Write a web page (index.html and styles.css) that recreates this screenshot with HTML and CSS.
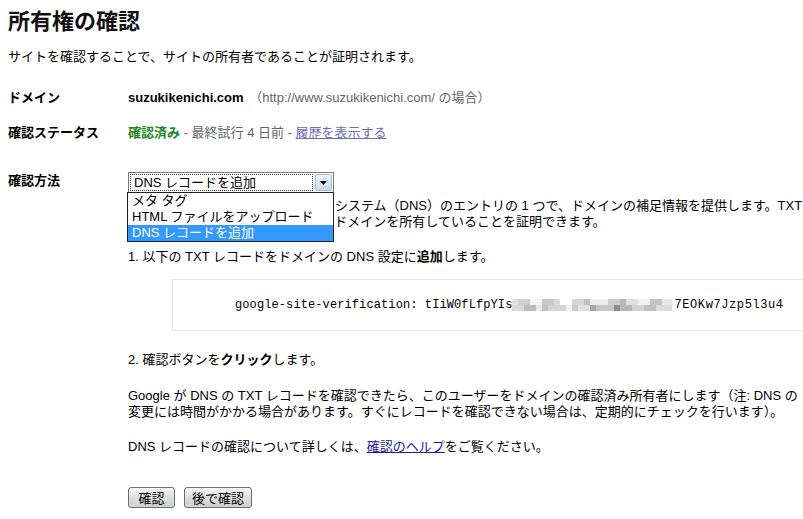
FILE: index.html
```html
<!DOCTYPE html>
<html lang="ja">
<head>
  <meta charset="UTF-8" />
  <title>所有権の確認</title>
  <link rel="stylesheet" href="styles.css">
</head>
<body>

  <h1>所有権の確認</h1>
  <p class="intro">サイトを確認することで、サイトの所有者であることが証明されます。</p>

  <div class="row row-domain">
    <div class="label">ドメイン</div>
    <div class="value">
      <b>suzukikenichi.com</b>
      <span class="muted">（http://www.suzukikenichi.com/ の場合）</span>
    </div>
  </div>

  <div class="row row-status">
    <div class="label">確認ステータス</div>
    <div class="value">
      <span class="ok">確認済み</span>
      <span class="muted">- 最終試行 4 日前 -</span>
      <a href="#" class="visited">履歴を表示する</a>
    </div>
  </div>

  <div class="row row-method">
    <div class="label">確認方法</div>
    <div class="value">

      <div class="select-wrap">
        <div class="select">
          <span class="select-text">DNS レコードを追加</span>
          <span class="select-arrow">
            <svg width="7" height="4" viewBox="0 0 7 4"><path d="M0 0h7L3.5 4z" fill="#000"/></svg>
          </span>
        </div>
        <ul class="dropdown">
          <li>メタ タグ</li>
          <li>HTML ファイルをアップロード</li>
          <li class="active">DNS レコードを追加</li>
        </ul>
      </div>

      <p class="desc">DNS レコードは、ドメイン ネーム システム（DNS）のエントリの 1 つで、ドメインの補足情報を提供します。TXT レコードを追加することによって、ドメインを所有していることを証明できます。</p>

      <p class="step1">1. 以下の TXT レコードをドメインの DNS 設定に<b>追加</b>します。</p>

      <div class="code-box">
        <code>google-site-verification: tIiW0fLfpYIs<span class="mosaic"></span><span class="tail">7EOKw7Jzp5l3u4</span></code>
      </div>

      <p class="step2">2. 確認ボタンを<b>クリック</b>します。</p>

      <p class="note">Google が DNS の TXT レコードを確認できたら、このユーザーをドメインの確認済み所有者にします（注: DNS の変更には時間がかかる場合があります。すぐにレコードを確認できない場合は、定期的にチェックを行います）。</p>

      <p class="help">DNS レコードの確認について詳しくは、<a href="#">確認のヘルプ</a>をご覧ください。</p>

      <div class="buttons">
        <button class="btn btn-verify">確認</button>
        <button class="btn btn-later">後で確認</button>
      </div>

    </div>
  </div>

</body>
</html>
```

FILE: styles.css
```css
html {
  overflow-x: hidden;
}

body {
  margin: 0;
  padding: 0 0 0 8px;
  font-family: "Liberation Sans", "Noto Sans CJK JP", sans-serif;
  font-size: 13px;
  line-height: 16px;
  color: #000;
  background: #fff;
}

h1 {
  font-size: 22px;
  line-height: 26px;
  font-weight: bold;
  margin: 9px 0 0;
  color: #111;
}

p {
  margin: 0;
}

.intro {
  margin-top: 14px;
}

.row {
  display: flex;
}

.row-domain {
  margin-top: 25px;
}

.row-status {
  margin-top: 19px;
}

.row-method {
  margin-top: 31px;
}

.label {
  width: 120px;
  flex-shrink: 0;
  font-weight: bold;
}

.row-method .label {
  padding-top: 1px;
}

.value {
  flex: 1;
  min-width: 0;
}

.muted {
  color: #666;
}

.row-domain .muted {
  margin-left: 2px;
}

.ok {
  color: #228822;
  font-weight: bold;
}

a {
  color: #1a1aa6;
}

a.visited {
  color: #6b6bc8;
}

/* select + open list */
.select-wrap {
  position: relative;
  width: 206px;
}

.select {
  display: flex;
  height: 19px;
  border: 1px solid #7a7a7a;
  background: #fff;
}

.select-text {
  flex: 1;
  margin: 1px;
  padding: 0 3px;
  line-height: 15px;
  border: 1px dotted #444;
}

.select-arrow {
  width: 15px;
  margin: 1px;
  display: flex;
  align-items: center;
  justify-content: center;
  background: linear-gradient(#eef3fb, #c9d7ee);
  border: 1px solid #a6bbdc;
  border-radius: 2px;
}

.dropdown {
  position: absolute;
  left: -1px;
  top: 20px;
  width: 205px;
  margin: 0;
  padding: 0;
  list-style: none;
  background: #fff;
  border: 1px solid #222;
  z-index: 2;
}

.dropdown li {
  height: 16px;
  line-height: 16px;
  padding: 0 4px;
}

.dropdown li.active {
  background: #3399ff;
  color: #fff;
}

.desc {
  margin-top: 5px;
}

.step1 {
  margin-top: 19px;
}

.code-box {
  margin: 14px -20px 0 44px;
  height: 50px;
  border: 1px solid #e3e6ea;
  display: flex;
  align-items: center;
  padding-left: 62px;
}

.code-box code {
  font-family: "Liberation Mono", "DejaVu Sans Mono", monospace;
  font-size: 12px;
  letter-spacing: 0.1px;
  white-space: nowrap;
  display: flex;
  align-items: center;
}

.code-box .tail {
  letter-spacing: 0.6px;
}

.mosaic {
  display: inline-block;
  width: 160px;
  height: 12px;
  margin-right: 2px;
  background:
    linear-gradient(90deg, #e2e2e2 0 6px, #cfcfcf 6px 18px, #f4f4f4 18px 30px, #c8c8c8 30px 42px, #dadada 42px 48px, #fff 48px 60px, #d6d6d6 60px 72px, #bdbdbd 72px 78px, #ececec 78px 96px, #cbcbcb 96px 108px, #b9b9b9 108px 114px, #e0e0e0 114px 126px, #f2f2f2 126px 138px, #c4c4c4 138px 150px, #e8e8e8 150px 160px) top / 160px 6px no-repeat,
    linear-gradient(90deg, #d8d8d8 0 12px, #bdbdbd 12px 24px, #e8e8e8 24px 30px, #c2c2c2 30px 36px, #d4d4d4 36px 54px, #f0f0f0 54px 60px, #cacaca 60px 66px, #dedede 66px 78px, #a8a8a8 78px 84px, #c6c6c6 84px 102px, #8e8e8e 102px 108px, #b6b6b6 108px 120px, #d2d2d2 120px 132px, #c0c0c0 132px 144px, #dcdcdc 144px 160px) bottom / 160px 6px no-repeat;
}

.step2 {
  margin-top: 21px;
}

.note {
  margin-top: 20px;
}

.help {
  margin-top: 19px;
}

.buttons {
  margin-top: 32px;
  display: flex;
  gap: 9px;
}

.btn {
  height: 21px;
  padding: 0 2px;
  font-family: "Liberation Sans", "Noto Sans CJK JP", sans-serif;
  font-size: 13px;
  color: #000;
  background: linear-gradient(#f6f6f6, #dedede 50%, #d0d0d0);
  border: 1px solid #707070;
  border-radius: 3px;
  cursor: pointer;
}

.btn-verify {
  width: 47px;
}

.btn-later {
  width: 68px;
}
```
